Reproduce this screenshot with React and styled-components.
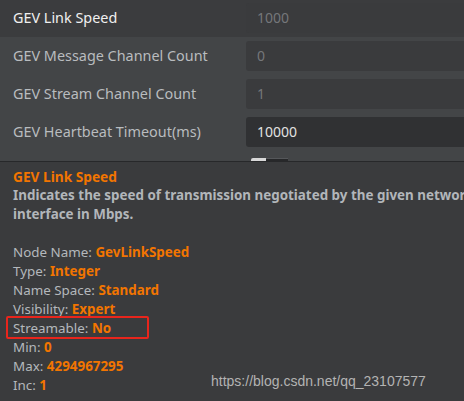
import React from "react";
import styled, { createGlobalStyle } from "styled-components";

const Global = createGlobalStyle`
  html, body { margin: 0; padding: 0; background: #3a3b3d; }
  body { width: 464px; height: 401px; overflow: hidden; font-family: "Noto Sans", "Open Sans", sans-serif; }
`;

const Page = styled.div`
  width: 464px;
  height: 401px;
  display: flex;
  flex-direction: column;
  overflow: hidden;
  position: relative;
`;

const Grid = styled.div`
  display: flex;
  flex-direction: column;
  background: #434547;
  height: 161px;
`;

const Row = styled.div`
  display: grid;
  grid-template-columns: 246px 1fr;
  align-items: start;
  height: ${(p) => (p.$first ? "37px" : "38px")};
  padding-top: 3px;
  box-sizing: border-box;
  background: ${(p) => (p.$first ? "#3b3c3e" : "transparent")};
  margin-bottom: ${(p) => (p.$first ? "1px" : "0")};
`;

const Label = styled.div`
  padding-left: 13px;
  height: 30px;
  line-height: 30px;
  font-size: 14.4px;
  color: ${(p) => (p.$active ? "#f0f0f0" : "#b9bcbf")};
  white-space: nowrap;
`;

const Field = styled.div`
  height: 30px;
  line-height: 30px;
  border-radius: 3px 0 0 3px;
  background: ${(p) => (p.$editable ? "#303133" : "#3a3b3d")};
  color: ${(p) => (p.$editable ? "#e2e2e2" : "#75777a")};
  padding-left: 11px;
  font-size: 14px;
`;

const SliderArea = styled.div`
  flex: 1;
  display: flex;
  align-items: flex-end;
  padding-left: 251px;
`;

const Thumb = styled.div`
  width: 15px;
  height: 3px;
  background: #d8d8d8;
  border-radius: 2px 0 0 0;
`;

const Track = styled.div`
  width: 22px;
  height: 2px;
  background: #27282a;
  border-top: 1px solid #55575a;
`;

const Divider = styled.div`
  height: 1px;
  background: #27282a;
`;

const Info = styled.div`
  flex: 1;
  background: #3a3b3d;
  padding: 5px 0 0 13px;
  font-size: 13.4px;
  line-height: 19px;
  color: #b4b8bc;
  white-space: nowrap;
`;

const Title = styled.div`
  color: #f27500;
  font-weight: 700;
  font-size: 13.7px;
`;

const Desc = styled.div`
  font-weight: 700;
  color: #b2b6ba;
  margin-bottom: 19px;
`;

const Prop = styled.div``;

const Value = styled.span`
  color: #f27500;
  font-weight: 700;
`;

const Highlight = styled.div`
  position: absolute;
  left: 6px;
  top: 316px;
  width: 139px;
  height: 19px;
  border: 2px solid #e8251c;
  border-radius: 2px;
`;

const Watermark = styled.div`
  position: absolute;
  left: 211px;
  top: 373px;
  font-family: "Liberation Sans", Arial, sans-serif;
  font-size: 14px;
  color: #b3b3b3;
`;

const rows = [
  { label: "GEV Link Speed", value: "1000", active: true },
  { label: "GEV Message Channel Count", value: "0" },
  { label: "GEV Stream Channel Count", value: "1" },
  { label: "GEV Heartbeat Timeout(ms)", value: "10000", editable: true },
];

const props = [
  ["Node Name", "GevLinkSpeed"],
  ["Type", "Integer"],
  ["Name Space", "Standard"],
  ["Visibility", "Expert"],
  ["Streamable", "No"],
  ["Min", "0"],
  ["Max", "4294967295"],
  ["Inc", "1"],
];

export default function App() {
  return (
    <Page>
      <Global />
      <Grid>
        {rows.map((r, i) => (
          <Row key={r.label} $first={i === 0}>
            <Label $active={r.active}>{r.label}</Label>
            <Field $editable={r.editable}>{r.value}</Field>
          </Row>
        ))}
        <SliderArea>
          <Thumb />
          <Track />
        </SliderArea>
      </Grid>
      <Divider />
      <Info>
        <Title>GEV Link Speed</Title>
        <Desc>
          Indicates the speed of transmission negotiated by the given network
          <br />
          interface in Mbps.
        </Desc>
        {props.map(([k, v]) => (
          <Prop key={k}>
            {k}: <Value>{v}</Value>
          </Prop>
        ))}
      </Info>
      <Highlight />
      <Watermark>https://blog.csdn.net/qq_23107577</Watermark>
    </Page>
  );
}
